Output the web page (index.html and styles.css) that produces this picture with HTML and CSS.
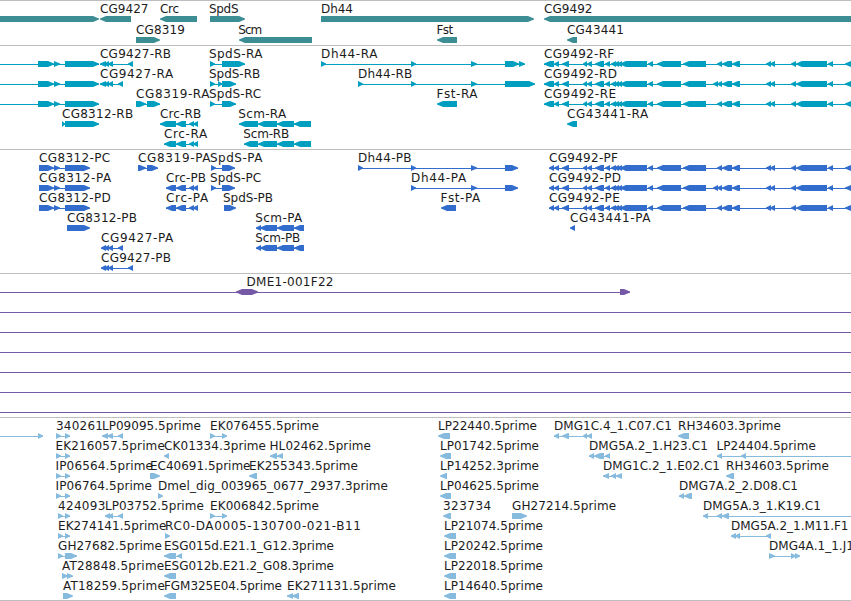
FILE: index.html
```html
<!DOCTYPE html>
<html lang="en">
<head>
    <meta charset="utf-8"/>
    <title>Genome browser</title>
    <link rel="stylesheet" href="styles.css">
</head>

<body>
<div class="browser" id="browser"></div>
<script src="tracks.js"></script>
</body>
</html>
```

FILE: styles.css
```css
* {
    margin: 0;
    padding: 0;
}

body {
    background: #fff;
    overflow: hidden;
}

.browser {
    width: 851px;
    display: flex;
    flex-direction: column;
    border-bottom: 1px solid #bebebe;
}

.track {
    border-top: 1px solid #bebebe;
    padding-bottom: 3px;
    color: #87bbde;
}

.row {
    display: block;
    width: 851px;
    height: 20px;
    overflow: visible;
}

.row text {
    font: 12px "DejaVu Sans", sans-serif;
    fill: #1c1c1c;
}

.exon, .intron {
    fill: currentColor;
}

.intron {
    shape-rendering: crispEdges;
}

.gene {
    color: #3d8e94;
    padding-bottom: 2px;
}

.gene .row {
    height: 21px;
}

.mrna {
    color: #009fc0;
}

.protein {
    color: #326dcd;
}

.clone {
    color: #7558a6;
}

.est {
    padding-bottom: 2px;
}
```

FILE: tracks.js
```js
// feature: [label, direction, exons, label end x, label x, line start, line end]
var cg9492 = "583-587 587-592 595-604 605-610 611-616 614-619 617-622 620-647 648-653 657-681 683-706 ";
var cg9492Tail = "717-722 722-732 732-740 766-771 770-775 791-796 796-827 828-833 845-870";
var cg9492Rna = "544-554 554-559 562-569 " + cg9492;
var cg9492Pep = "549-554 554-559 562-569 " + cg9492;

var tracks = [
    {
        type: "gene",
        rows: [
            [["", ">", "-10-99"], ["CG9427", "<", "100-131", 148], ["Crc", "<", "160-197", 178.5],
                ["SpdS", ">", "210-245", 238, 209], ["Dh44", ">", "321-534", 352.3], ["CG9492", "<", "544-900", 592]],
            [["CG8319", ">", "136-160", 184.3], ["Scm", "<", "239-312", 261.7, 238.3], ["Fst", "<", "437-457", 452.7, 436.5],
                ["CG43441", "<", "567-577", 623.5]]
        ]
    },
    {
        type: "mrna",
        rows: [
            [["", ">", "38-54 54-60 65-99", 0, 0, -10], ["CG9427-RB", "<", "100-106 104-109 108-113 128-133", 170.5],
                ["SpdS-RA", ">", "210-215 222-245", 262, 209],
                ["Dh44-RA", ">", "321-326 411-416 471-477 505-519 519-525", 377],
                ["CG9492-RF", "<", cg9492Rna + cg9492Tail, 613.7]],
            [["", ">", "38-54 54-60 65-99", 0, 0, -10], ["CG9427-RA", "<", "100-106 104-109 108-113 118-123", 172.7],
                ["SpdS-RB", ">", "210-215 218-222 222-236", 259.7, 209],
                ["Dh44-RB", ">", "358-363 411-416 471-477 505-535", 411.7],
                ["CG9492-RD", "<", cg9492Rna + "713-718 " + cg9492Tail, 616.5]],
            [["", ">", "38-54 54-60 65-99", 0, 0, -10], ["CG8319-RA", ">", "136-146 147-160", 209],
                ["SpdS-RC", ">", "210-215 222-236", 260.7, 209], ["Fst-RA", "<", "437-457", 477, 436.5],
                ["CG9492-RE", "<", cg9492Rna + cg9492Tail, 615.5]],
            [["CG8312-RB", ">", "62-65 65-99", 132.7], ["Crc-RB", "<", "160-176 176-186 189-194 193-198", 200.7],
                ["Scm-RA", "<", "239-258 258-277 277-294 294-311", 285.7, 238.3], ["CG43441-RA", "<", "567-577", 647.7]],
            [["Crc-RA", "<", "164-176 176-186 189-194 193-198", 206.7],
                ["Scm-RB", "<", "244-258 258-277 277-294 294-311", 288.7, 243.3]]
        ]
    },
    {
        type: "protein",
        rows: [
            [["CG8312-PC", ">", "39-54 54-60 65-90", 109.7], ["CG8319-PA", ">", "138-146 147-158", 210],
                ["SpdS-PA", ">", "211-216 222-235", 262, 210],
                ["Dh44-PB", ">", "358-363 411-416 471-477 505-518", 411],
                ["CG9492-PF", "<", cg9492Pep + cg9492Tail, 617.5]],
            [["CG8312-PA", ">", "39-54 54-60 65-90", 110.7], ["Crc-PB", "<", "166-176 176-186 189-194 193-198", 205.5],
                ["SpdS-PC", ">", "211-216 222-235", 260.7, 210], ["Dh44-PA", ">", "411-416 471-477 505-518", 465.7],
                ["CG9492-PD", "<", cg9492Pep + "713-718 " + cg9492Tail, 620.5]],
            [["CG8312-PD", ">", "39-54 54-60 65-90", 110.3], ["Crc-PA", "<", "166-176 176-186 189-194 193-198", 207.7],
                ["SpdS-PB", ">", "224-236", 272.5, 223], ["Fst-PA", "<", "441-456", 479.7, 440.5],
                ["CG9492-PE", "<", cg9492Pep + cg9492Tail, 619.3]],
            [["CG8312-PB", ">", "67-90", 136.5], ["Scm-PA", "<", "256-261 260-277 277-294 294-304", 301.7, 255.3],
                ["CG43441-PA", "<", "570-575", 650]],
            [["CG9427-PA", "<", "101-106 104-109 108-113 118-123", 172.7],
                ["Scm-PB", "<", "256-261 260-277 277-294 294-304", 299.7, 255.3]],
            [["CG9427-PB", "<", "101-106 104-109 108-113 128-133", 170.5]]
        ]
    },
    {
        type: "clone",
        rows: [
            [["DME1-001F22", "<", "236-252", 333, 246.5, -10, 630], ["", ">", "242-258 620-630"]],
            [["", ">", "", 0, 0, -10, 861]],
            [["", ">", "", 0, 0, -10, 861]],
            [["", ">", "", 0, 0, -10, 861]],
            [["", ">", "", 0, 0, -10, 861]],
            [["", ">", "", 0, 0, -10, 861]],
            [["", ">", "", 0, 0, -10, 861]]
        ]
    },
    {
        type: "est",
        rows: [
            [["", ">", "38-43", 0, 0, -10], ["340261", ">", "56-61 65-70", 102.5],
                ["LP09095.5prime", "<", "102-108 107-113 118-123", 200.3],
                ["EK076455.5prime", ">", "210-215 222-227", 318.5], ["LP22440.5prime", "<", "438-450", 536.5],
                ["DMG1C.4_1.C07.C1", "<", "554-559 562-569 583-587 587-592", 671.3],
                ["RH34603.3prime", "<", "678-689", 780.5]],
            [["EK216057.5prime", ">", "56-61 65-70", 164.3, 55.5], ["CK01334.3prime", "<", "164-169", 265.5],
                ["HL02462.5prime", "<", "270-277 277-283", 370.5, 269.5], ["LP01742.5prime", "<", "440-451", 538.5],
                ["DMG5A.2_1.H23.C1", "<", "589-594 594-604 605-610", 707.3],
                ["LP24404.5prime", "<", "717-722 741-746", 815.3, 716.5, 717, 861]],
            [["IP06564.5prime", ">", "56-61 65-70", 152.5, 55.5], ["EC40691.5prime", ">", "150-160", 250],
                ["EK255343.5prime", "<", "249-257", 357.5], ["LP14252.3prime", "<", "440-447", 538.5],
                ["DMG1C.2_1.E02.C1", "<", "603-609 611-616 616-622", 719.5],
                ["RH34603.5prime", "<", "726-734", 828.5]],
            [["IP06764.5prime", ">", "56-61 65-70", 151.5, 55.5],
                ["Dmel_dig_003965_0677_2937.3prime", ">", "158-163", 387.5],
                ["LP04625.5prime", "<", "440-451", 538.5], ["DMG7A.2_2.D08.C1", "<", "679-684 684-692", 797.5]],
            [["424093", ">", "58-63 65-70", 104.9], ["LP03752.5prime", "<", "105-110 108-113 118-123", 203.3],
                ["EK006842.5prime", ">", "210-215 222-227", 318.5], ["323734", "<", "443-451", 490.7],
                ["GH27214.5prime", ">", "512-527", 615.7],
                ["DMG5A.3_1.K19.C1", "<", "703-708 717-722 722-729", 820.5, 703, 703, 861]],
            [["EK274141.5prime", ">", "58-63 65-70", 166], ["RC0-DA0005-130700-021-B11", ">", "165-170", 360.5],
                ["LP21074.5prime", "<", "444-456", 542.5], ["DMG5A.2_1.M11.F1", "<", "731-736 735-740 766-771", 848]],
            [["GH27682.5prime", ">", "58-63 65-77", 161.5], ["ESG015d.E21.1_G12.3prime", "<", "164-176 177-182", 333.5],
                ["LP20242.5prime", "<", "444-456", 542.5], ["DMG4A.1_1.J11", ">", "769-775 791-796 795-800", 861]],
            [["AT28848.5prime", ">", "62-68 67-73", 163.7], ["ESG012b.E21.2_G08.3prime", "<", "164-176", 333.5],
                ["LP22018.5prime", "<", "444-456", 542.5]],
            [["AT18259.5prime", ">", "63-73", 164.3], ["FGM325E04.5prime", "<", "164-176", 281.5],
                ["EK271131.5prime", "<", "287-293 292-299", 395.5], ["LP14640.5prime", "<", "444-456", 542.5]]
        ]
    }
];

// box from a to b with the arrow tip on the side of the strand
function exonPath(a, b, dir) {
    var tip = Math.min(6, b - a);
    if (dir === ">") {
        return "M" + a + " 15H" + (b - tip) + "L" + b + " 17.6V18.4L" + (b - tip) + " 21H" + a + "z";
    }
    return "M" + b + " 15H" + (a + tip) + "L" + a + " 17.6V18.4L" + (a + tip) + " 21H" + b + "z";
}

function drawFeature(f) {
    var exons = (f[2].match(/-?\d+-\d+/g) || []).map(function (s) {
        var m = s.match(/^(-?\d+)-(\d+)$/);
        return [Number(m[1]), Number(m[2])];
    });
    var html = "";
    var start = f[5] !== undefined ? f[5] : exons[0][0];
    var end = f[6] !== undefined ? f[6] : exons[exons.length - 1][1];

    if (exons.length !== 1 || f[5] !== undefined) {
        html += '<rect class="intron" x="' + start + '" y="18" width="' + (end - start) + '" height="1"/>';
    }
    exons.forEach(function (e) {
        html += '<path class="exon" d="' + exonPath(e[0], e[1], f[1]) + '"/>';
    });
    if (f[0]) {
        var x = f[4] || start;
        html += '<text x="' + x + '" y="12" textLength="' + (f[3] - x + 0.5) + '">' + f[0] + '</text>';
    }
    return html;
}

document.getElementById("browser").innerHTML = tracks.map(function (track) {
    return '<div class="track ' + track.type + '">' + track.rows.map(function (row) {
        return '<svg class="row">' + row.map(drawFeature).join("") + '</svg>';
    }).join("") + '</div>';
}).join("");
```
